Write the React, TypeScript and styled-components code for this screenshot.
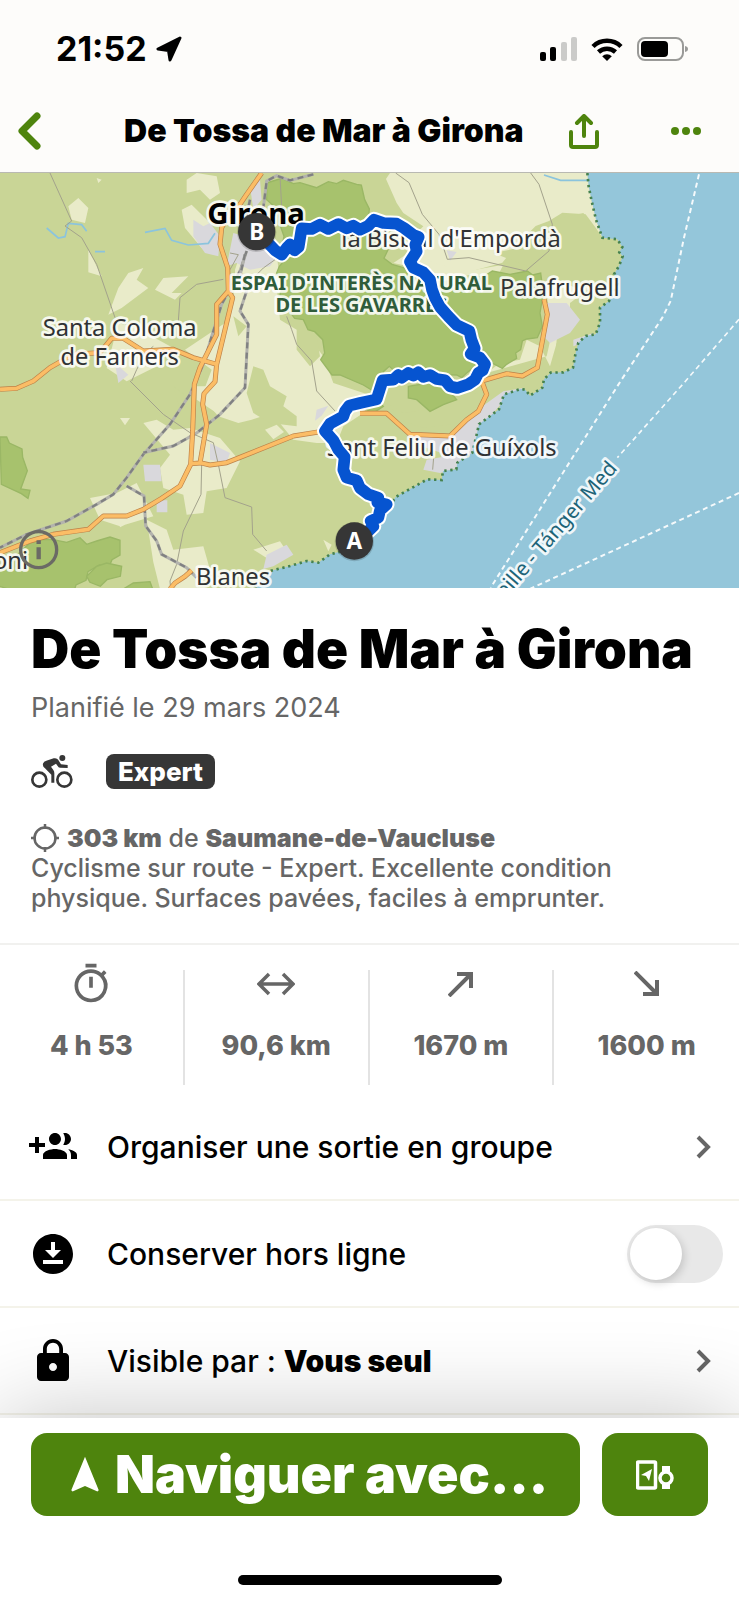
import React from "react";
import styled, { createGlobalStyle, css } from "styled-components";
import { MdDownloadForOffline, MdLock, MdNavigation, MdOutlineTimer } from "react-icons/md";

const green = "#4e840d";
const grey = "#666666";
const ink = "#363636";

const GlobalStyle = createGlobalStyle`
  *, *::before, *::after { box-sizing: border-box; }
  body {
    margin: 0;
    background: #ffffff;
    color: #000000;
    font-family: Inter, "Liberation Sans", sans-serif;
  }
  h1, h2, p, ul { margin: 0; padding: 0; }
  svg { display: block; flex: none; }
`;

const Screen = styled.div`
  display: flex;
  flex-direction: column;
  min-height: 100vh;
`;

const TopBar = styled.header`
  background: #fdfcfa;
`;

const StatusBar = styled.div`
  display: flex;
  align-items: center;
  justify-content: space-between;
  height: 98px;
  padding: 0 50px 0 56px;
`;

const Clock = styled.div`
  display: flex;
  align-items: center;
  gap: 9px;
  font-size: 34px;
  font-weight: 700;
  line-height: 40px;
`;

const StatusIcons = styled.div`
  display: flex;
  align-items: center;
  gap: 14px;
`;

const NavBar = styled.div`
  display: grid;
  grid-template-columns: 124px 1fr auto;
  align-items: center;
  height: 74px;
  padding: 0 38px 8px 0;
`;

const IconButton = styled.button`
  display: flex;
  padding: 0;
  border: 0;
  background: none;
  color: ${green};
  cursor: pointer;
`;

const BackButton = styled(IconButton)`
  padding-left: 17px;
`;

const NavTitle = styled.h2`
  font-size: 32px;
  font-weight: 900;
  line-height: 40px;
  white-space: nowrap;
`;

const NavActions = styled.div`
  display: flex;
  align-items: center;
  gap: 72px;
`;

const MapSvg = styled.svg`
  width: 100%;
  height: auto;
  border-top: 1px solid #b9b9b2;
  font-family: "Noto Sans", sans-serif;
`;

const Summary = styled.section`
  display: flex;
  flex-direction: column;
  padding: 29px 31px 30px;
  border-bottom: 2px solid #f1f1ef;
  color: ${grey};
`;

const TourTitle = styled.h1`
  color: #000000;
  font-size: 53px;
  font-weight: 900;
  line-height: 64px;
  white-space: nowrap;
`;

const Planned = styled.p`
  margin-top: 11px;
  font-size: 27px;
  font-weight: 400;
  line-height: 32px;
`;

const SportRow = styled.div`
  display: flex;
  align-items: center;
  gap: 33px;
  margin-top: 30px;
  color: ${ink};
`;

const Badge = styled.span`
  padding: 0 12px;
  border-radius: 8px;
  background: ${ink};
  color: #ffffff;
  font-size: 26px;
  font-weight: 800;
  line-height: 35px;
`;

const Description = styled.p`
  margin-top: 34px;
  font-size: 25px;
  font-weight: 500;
  line-height: 30px;

  strong { font-weight: 900; }
`;

const Origin = styled.span`
  display: flex;
  align-items: center;
  gap: 8px;
`;

const Stats = styled.ul`
  display: grid;
  grid-template-columns: repeat(4, 1fr);
  padding: 25px 0 9px;
  list-style: none;
`;

const Stat = styled.li`
  display: flex;
  flex-direction: column;
  align-items: center;
  height: 115px;
  border-right: 2px solid #e3e3e3;
  color: ${grey};
  font-size: 27px;
  font-weight: 800;
  line-height: 32px;

  &:last-child { border-right: 0; }
`;

const StatIcon = styled.span`
  display: flex;
  align-items: center;
  height: 44px;
  margin: -8px 0 24px;
`;

const Actions = styled.section`
  padding-bottom: 3px;
`;

const rowStyle = css`
  display: flex;
  align-items: center;
  width: 100%;
  height: 107px;
  padding: 0 27px 0 29px;
  border: 0;
  border-bottom: 2px solid #f4f3ea;
  background: none;
  color: #000000;
  font: 500 30px/36px Inter, "Liberation Sans", sans-serif;
  text-align: left;
  cursor: pointer;

  strong { font-weight: 900; }
`;

const ActionRow = styled.button`${rowStyle}`;

const ToggleRow = styled.label`
  ${rowStyle}
  padding-right: 16px;
`;

const RowText = styled.span`
  flex: 1;
  padding-left: 30px;
`;

const Switch = styled.input`
  appearance: none;
  display: flex;
  align-items: center;
  width: 96px;
  height: 58px;
  margin: 0;
  padding: 3px;
  border-radius: 29px;
  background: #e8e8e8;
  cursor: pointer;

  &::before {
    content: "";
    width: 52px;
    height: 52px;
    border-radius: 50%;
    background: #ffffff;
    box-shadow: 2px 3px 8px rgba(0, 0, 0, 0.16);
  }
  &:checked { background: ${green}; }
  &:checked::before { margin-left: auto; }
`;

const Footer = styled.footer`
  position: sticky;
  bottom: 0;
  margin-top: auto;
  padding: 15px 31px;
  background: #ffffff;
  box-shadow: 0 0 96px rgba(0, 0, 0, 0.24);
`;

const FooterButtons = styled.div`
  display: flex;
  gap: 22px;
`;

const PrimaryButton = styled.button`
  display: flex;
  align-items: center;
  justify-content: center;
  gap: 8px;
  height: 83px;
  padding: 0;
  border: 0;
  border-radius: 16px;
  background: ${green};
  color: #ffffff;
  font: 900 52px/64px Inter, "Liberation Sans", sans-serif;
  cursor: pointer;
`;

const NavigateButton = styled(PrimaryButton)`
  flex: 1;
`;

const DeviceButton = styled(PrimaryButton)`
  width: 106px;
`;

const HomeIndicator = styled.div`
  width: 264px;
  height: 10px;
  margin: 59px auto 0;
  border-radius: 5px;
  background: #000000;
`;

const MapPlace = styled.text<{ $size?: number; $weight?: number; $fill?: string }>`
  font-size: ${(p) => p.$size ?? 71}px;
  font-weight: ${(p) => p.$weight ?? 400};
  fill: ${(p) => p.$fill ?? "#303234"};
  stroke: rgba(255, 255, 255, 0.85);
  stroke-width: 16px;
  stroke-linejoin: round;
  paint-order: stroke;
`;

const coast =
  "1762,0 1766,40 1775,84 1788,140 1807,194 1852,199 1867,222 1858,238 1868,250 1857,279 1842,304 1852,332 1827,384 1800,404 1800,449 1787,484 1757,489 1735,509 1727,539 1719,584 1690,598 1652,599 1632,619 1627,644 1590,668 1576,650 1562,648 1512,664 1497,709 1437,754 1429,789 1417,839 1372,869 1369,889 1329,894 1325,921 1282,919 1237,944 1187,972 1165,1005 1122,1075 1063,1125 990,1144 955,1169 920,1164 870,1179 810,1194 760,1248";

const gavarres =
  "800,30 845,16 880,32 900,29 950,44 985,26 1010,32 1030,22 1070,34 1084,36 1094,80 1108,108 1104,150 1122,160 1150,196 1164,230 1152,256 1176,274 1210,284 1240,300 1290,330 1340,346 1400,344 1440,318 1477,294 1530,304 1582,294 1598,306 1622,300 1630,360 1620,420 1627,460 1612,494 1580,498 1567,504 1562,530 1547,540 1550,556 1520,574 1507,586 1480,572 1457,568 1440,590 1420,584 1400,600 1385,614 1370,606 1310,604 1240,594 1190,600 1168,580 1150,596 1142,640 1116,652 1090,636 1020,606 996,606 962,560 974,540 968,500 944,476 924,470 910,440 884,436 866,412 862,380 840,366 846,330 830,300 838,280 852,264 846,220 852,190 838,150 834,110 800,80";

const highways = [
  "785,0 740,64 720,94 685,130 665,164 660,214 683,284 685,354 650,394 650,484 600,584 583,634 578,774 572,874 540,939 485,976 430,1009 380,1029 310,1029 265,1069 160,1084 90,1104 0,1139",
  "685,354 698,374 650,574 645,626 612,662 608,694 620,754 600,870 572,872",
  "600,869 630,876 680,869 880,789 960,776",
  "1080,721 1160,721 1230,784 1350,789 1400,740 1435,715 1460,664 1445,624 1520,602 1567,609 1612,584 1642,424 1632,379",
  "0,649 50,646 100,624 150,584 220,544 300,539 335,496 370,496 430,534 520,529 580,554 650,574",
  "510,1248 525,1230 555,1210 575,1192",
];

const lanes = [
  "150,0 215,144 195,159 245,194 290,274 345,434",
  "670,319 590,334 540,374 535,444",
  "460,520 435,540 410,590 395,624",
  "825,260 790,285 745,330",
  "690,240 715,245 690,290",
  "860,430 875,470 890,514 935,564 950,654 1005,714",
  "840,10 845,100 850,150",
  "1187,0 1227,29 1267,124 1317,184 1342,259 1407,254 1577,294 1647,234 1657,154 1617,34 1592,0",
  "390,624 490,724 570,779 640,809 655,874 675,974 755,1002 758,1084 800,1134",
  "605,874 603,964 550,1074 530,1174 510,1224 512,1248",
  "1302,840 1298,890",
];

const rails = [
  "940,4 870,22 830,8 800,24 790,104",
  "740,234 720,294 665,394 640,474 610,574 570,664 510,754 430,844 380,914 340,964 290,994 200,1044 80,1084 0,1124",
  "735,244 722,300 740,354 720,414 745,454 735,644 660,724 590,780 520,819 430,839",
  "380,939 432,969 437,1059 470,1104 485,1144 560,1184 590,1214",
  "750,80 735,150",
];

const route =
  "790,195 825,232 845,245 860,225 870,214 884,232 896,222 905,166 935,168 960,155 985,168 1015,153 1040,166 1060,158 1080,170 1105,158 1122,140 1150,150 1190,152 1212,165 1240,186 1256,192 1246,215 1250,235 1230,266 1240,284 1270,298 1290,320 1296,350 1305,374 1320,402 1345,430 1370,456 1408,474 1414,500 1424,526 1412,543 1440,554 1455,574 1448,592 1435,600 1425,620 1405,634 1372,645 1350,640 1335,622 1310,618 1290,606 1270,612 1255,598 1240,608 1225,600 1205,614 1195,606 1180,620 1148,622 1130,679 1080,690 1048,698 1035,715 1030,730 990,752 975,774 1000,802 1015,830 1034,852 1030,890 1040,914 1070,922 1080,945 1105,964 1135,974 1132,988 1160,994 1140,1012 1135,1034 1112,1044 1120,1060 1100,1079";

function RouteMap() {
  return (
    <MapSvg viewBox="0 0 2217 1245" role="img" aria-label="Carte du parcours" fill="none">
      <rect width="2217" height="1248" fill="#c9d596" />
      <g fill="#e9ebc9">
        <path d="M1170 0H1762l13 84 32 110-20-30-30-40-70-5-40 25-40 15-60 60-40 50-110 30-120 0-60-70-40-50-20-40 30-20-70-40z" />
        <path d="M560 20l30-20 60 10 10 50-30 20-30-30-40 10zM545 110l30-15 50 50 20 60-40 20-50-60zM700 200l70 0 60 40 10 90 20 70 40 60 70 90 30 80 120 40-30 50-60 40-20 50-60 0-70-10-65-80-60 20-40 10-60-20-50-60 30-80-80-60 120-80 30-100 0-60 20-60z" />
        <path d="M235 75l30 30-10 45-40-10-10-40zM290 15l15 5-10 10zM265 230l30 60 10 20-40-12zM385 300l45-15-20 35 35 25-80 60-40 20 30-80zM490 315l75-5-50 50 30 0-20 20-60-30zM355 450l55 15 110 60-60 60-80 40-60-40z" />
        <path d="M430 750l40-10 50 30 50-5 90 30 60 70-40 80-60 10-10 65-50 5-10-60-60-20-10-60 30-40zM360 735l30 0-15 22zM590 640l120 0 60 60-70 30-50-10-60-40zM795 770l35-15 22 22-32 22zM270 975l80-15 60-30 30 60 20 40-100 30-60-20zM350 1028l70 5-60 30zM440 1040l60 30 20 60 90-10 20 70-40 58-110 0-20-80zM760 1130l80-25 20 30-60 20zM970 1100l25 15-10 20z" />
        <path d="M1460 600l40-30 60-10 20-60 40 20 30 60 20-70 40-30 0-90 80-60-60-50-60 10-30 80 20 90-20 90zM1180 270l60-40 60 40 100 25 110-20-20 40-80-10-80 20-80-40z" />
      </g>
      <g fill="#c9d596">
        <path d="M1080 0l70 0 40 90 20 30 60 40-40 40-70 20-50-60zM1480 240l100-20 80-80 90-20 55 70 50 5 14 30-12 60-60 50-70 10-130-60z" />
        <path d="M830 340l60 90 60 60 10 60-30 30-40-50 0-60-50-30zM760 580l30 10 20 50 50 30-10 30 40 30 0 30-80-10-50-30-20-60zM700 430l40 30-25 30zM520 640l40 30-20 40zM1670 500l20-60 25 40 10 70-30 40-30-20z" />
        <path d="M1160 690l50 30 70-10 80-40 70-10 20 30-60 60-120 15-60-20z" />
      </g>
      <polygon points={gavarres} fill="#a7c26d" stroke="#9ab765" strokeWidth="4" />
      <g fill="#a7c26d" stroke="#9ab765" strokeWidth="4">
        <path d="M1225 640l60-10 60 20 25 30-40 15-40 20-40-35-25-5zM1080 700l50-20 20 20-30 20z" />
        <path d="M0 792l20 0 8 18 38 18 2 25 14 40-20 55 28 4-6 24-20-14-60-28zM100 1100l60 0 40 8 40-14 20 20 30-10 40-12 30 10 0 44-24 14-8 20-30-4-34 20-6 26-30 14-4 12-200 0-60-20z" />
        <path d="M270 1228l-10-18 30-30 30-10 45 10-4 30-40 10-20 20zM370 1248l30-18 50-4 8 22z" />
      </g>
      <g fill="#d9d8dc">
        <path d="M580 140l30 20 20-10 30 40-5 60-40-10-35-50zM700 180l100 30 40 30-30 40-60 10-40-20-30 10zM750 40l30-20 5 60-25 30zM1640 390l60 0 40 50-30 40-60 30-20-20zM1720 500l60-20-10 20-50 20zM1230 790l120 5 90-90 70-50 60-10-10 20-50 20-60 70-20 70-60 60-50 15 5-60-60-20zM1280 860l60-10-20 50-50-10zM430 875l50 0 5 50-50 0zM470 982l32 0 0 36-32 0zM630 810l60 30-10 30-50-10zM800 1145l60-30 20 30-60 35-30 8zM950 710l35-12-20 30-20 15zM345 570l40 35-30 25zM1340 232l30 5-20 26z" />
      </g>
      <path d="M140 165l35 30 20-4 10-40 40 4 15 20M435 178l60-12 20 36 50 14 60-5 20-30M285 236h30M1632 6l50 16h80" stroke="#8bc4dd" strokeWidth="5" />

      <polygon points={`${coast} 2217,1248 2217,0`} fill="#94c6da" />
      <polyline points={coast} stroke="#46824f" strokeWidth="8" strokeDasharray="7 11" />

      {lanes.map((points) => (
        <polyline key={points} points={points} stroke="#a3a28c" strokeWidth="3" />
      ))}
      {rails.map((points) => (
        <g key={points}>
          <polyline points={points} stroke="#b3b3ad" strokeWidth="9" />
          <polyline points={points} stroke="#808182" strokeWidth="7" strokeDasharray="18 13" />
        </g>
      ))}
      {highways.map((points) => (
        <polyline key={points} points={points} stroke="#bd8148" strokeWidth="15" strokeLinejoin="round" />
      ))}
      {highways.map((points) => (
        <polyline key={points} points={points} stroke="#fbbd66" strokeWidth="11" strokeLinejoin="round" />
      ))}

      <g stroke="#ffffff" strokeWidth="6" strokeDasharray="15 11" opacity="0.9">
        <polyline points="2097,4 2052,194 2012,384 1987,434 1862,624 1472,1244" />
        <polyline points="2217,439 2057,624 1852,854" strokeWidth="5" />
        <polyline points="2217,960 1587,1249" />
      </g>

      <MapPlace x="622" y="152" $size={88} $weight={700} $fill="#000000">Girona</MapPlace>
      <MapPlace x="1024" y="221">la Bisbal d'Empordà</MapPlace>
      <MapPlace x="1500" y="370">Palafrugell</MapPlace>
      <MapPlace x="359" y="488" textAnchor="middle">Santa Coloma</MapPlace>
      <MapPlace x="359" y="577" textAnchor="middle">de Farners</MapPlace>
      <MapPlace x="980" y="850">Sant Feliu de Guíxols</MapPlace>
      <MapPlace x="588" y="1235">Blanes</MapPlace>
      <MapPlace x="84" y="1188" textAnchor="end">oni</MapPlace>
      <MapPlace x="1084" y="351" textAnchor="middle" $size={60} $weight={700} $fill="#2f5c3a">
        ESPAI D'INTERÈS NATURAL
      </MapPlace>
      <MapPlace x="1084" y="417" textAnchor="middle" $size={60} $weight={700} $fill="#2f5c3a">
        DE LES GAVARRES
      </MapPlace>
      <MapPlace transform="translate(1854 888) rotate(-49)" textAnchor="end" $size={62} $fill="#1d6478">
        eille - Tánger Med
      </MapPlace>

      <polyline points={route} stroke="#ffffff" strokeWidth="47" strokeLinejoin="round" strokeLinecap="round" />
      <polyline points={route} stroke="#0654d0" strokeWidth="35" strokeLinejoin="round" strokeLinecap="round" />

      <g fontSize="68" fontWeight="700" textAnchor="middle">
        <circle cx="770" cy="178" r="59" fill="#000000" opacity="0.15" />
        <circle cx="770" cy="176" r="56" fill={ink} />
        <text x="770" y="200" fill="#ffffff">B</text>
        <circle cx="1063" cy="1106" r="59" fill="#000000" opacity="0.15" />
        <circle cx="1063" cy="1104" r="56" fill={ink} />
        <text x="1063" y="1128" fill="#ffffff">A</text>
      </g>
      <g stroke="#6b6a65" strokeWidth="10">
        <circle cx="116" cy="1130" r="54" />
        <path d="M116 1123v36M116 1102v11" strokeWidth="13" />
      </g>
    </MapSvg>
  );
}

const BackIcon = () => (
  <svg width="25" height="40" viewBox="0 0 25 40" fill="none" stroke="currentColor" strokeWidth="7" strokeLinecap="round" strokeLinejoin="round">
    <path d="M20 5L5 20l15 15" />
  </svg>
);

const ShareIcon = () => (
  <svg width="30" height="35" viewBox="0 0 30 35" fill="none" stroke="currentColor" strokeWidth="4" strokeLinecap="round" strokeLinejoin="round">
    <path d="M2 18v13q0 2 2 2h22q2 0 2-2V18" />
    <path d="M15 22V3M8 9l7-7 7 7" />
  </svg>
);

const MoreIcon = () => (
  <svg width="30" height="8" viewBox="0 0 30 8" fill="currentColor">
    <circle cx="4" cy="4" r="4" />
    <circle cx="15" cy="4" r="4" />
    <circle cx="26" cy="4" r="4" />
  </svg>
);

const LocationIcon = () => (
  <svg width="26" height="26" viewBox="0 0 26 26" stroke="#000000" strokeWidth="3" strokeLinejoin="round">
    <path d="M24 2L2 13l10.500 1.500L14 24z" />
  </svg>
);

const SignalIcon = () => (
  <svg width="37" height="24" viewBox="0 0 37 24">
    <rect x="0" y="15" width="6" height="9" rx="2" />
    <rect x="10" y="10" width="6" height="14" rx="2" />
    <g fill="#cbcbc9">
      <rect x="21" y="5" width="6" height="19" rx="2" />
      <rect x="31" y="0" width="6" height="24" rx="2" />
    </g>
  </svg>
);

const WifiIcon = () => (
  <svg width="32" height="24" viewBox="0 0 32 24" fill="none" stroke="#000000" strokeWidth="4.500">
    <path d="M2 9.500a20 20 0 0 1 28 0" />
    <path d="M7.500 15a12.500 12.500 0 0 1 17 0" />
    <path d="M16 24l-4.800-4.800a7 7 0 0 1 9.600 0z" fill="#000000" stroke="none" />
  </svg>
);

const BatteryIcon = () => (
  <svg width="52" height="24" viewBox="0 0 52 24">
    <rect x="1" y="1" width="45" height="22" rx="7" fill="none" stroke="#9a9a98" strokeWidth="2" />
    <rect x="4" y="4" width="27" height="16" rx="4" />
    <path d="M48 9c4 .5 4 5.500 0 6z" fill="#9a9a98" />
  </svg>
);

const RoadBikeIcon = () => (
  <svg width="42" height="35" viewBox="35 42 126 105" fill="currentColor">
    <g fill="none" stroke="currentColor" strokeWidth="8">
      <circle cx="60" cy="119" r="21" />
      <circle cx="135" cy="119" r="21" />
    </g>
    <circle cx="129" cy="54" r="9" />
    <path d="M71 71q2-7 10-9l22-7q10-2 14 5l8 13 20 2v9l-23-1q-5 0-7-5l-5-7-15 9 7 10q3 4 3 10v28H96v-24l-19-19q-8-6-6-14z" />
  </svg>
);

const CrosshairIcon = () => (
  <svg width="28" height="28" viewBox="0 0 28 28" fill="none" stroke="currentColor" strokeWidth="2.500">
    <circle cx="14" cy="14" r="10.500" />
    <path d="M14 0v5M14 23v5M0 14h5M23 14h5" />
  </svg>
);

const DistanceIcon = () => (
  <svg width="38" height="24" viewBox="0 0 38 24" fill="none" stroke="currentColor" strokeWidth="3.500">
    <path d="M3 12h32M12 2L2 12l10 10M26 2l10 10-10 10" />
  </svg>
);

const SlopeIcon = ({ down = false }: { down?: boolean }) => (
  <svg width="26" height="26" viewBox="0 0 26 26" fill="none" stroke="currentColor" strokeWidth="4">
    {down ? <path d="M1 1l22 22M23 9v14H9" /> : <path d="M1 25L23 3M9 3h14v14" />}
  </svg>
);

const GroupAddIcon = () => (
  <svg width="48" height="48" viewBox="0 0 24 24" fill="currentColor">
    <path d="M8 10H5V7H3v3H0v2h3v3h2v-3h3v-2zm10 1c1.660 0 2.990-1.340 2.990-3S19.660 5 18 5c-.32 0-.63.05-.91.14.57.81.9 1.790.9 2.860s-.34 2.040-.9 2.860c.28.09.59.14.91.14zm-5 0c1.660 0 2.990-1.340 2.990-3S14.660 5 13 5c-1.660 0-3 1.340-3 3s1.340 3 3 3zm6.620 2.160c.83.73 1.380 1.660 1.380 2.840v2h3v-2c0-1.540-2.370-2.490-4.380-2.840zM13 13c-2 0-6 1-6 3v2h12v-2c0-2-4-3-6-3z" />
  </svg>
);

const ChevronIcon = () => (
  <svg width="16" height="24" viewBox="0 0 16 24" fill="none" stroke={grey} strokeWidth="4">
    <path d="M2 2l10 10L2 22" />
  </svg>
);

const DevicesIcon = () => (
  <svg width="38" height="30" viewBox="0 0 38 30" fill="none" stroke="currentColor" strokeWidth="3.500">
    <rect x="1.500" y="2" width="18" height="26" rx="1" />
    <path d="M16 9l-3 12-3-5-5-1z" fill="currentColor" stroke="none" />
    <circle cx="30" cy="18" r="6" />
    <path d="M26 12V6h8v6zM26 24v5h8v-5z" fill="currentColor" stroke="none" />
  </svg>
);

const stats = [
  { value: "4 h 53", icon: <MdOutlineTimer size={44} /> },
  { value: "90,6 km", icon: <DistanceIcon /> },
  { value: "1670 m", icon: <SlopeIcon /> },
  { value: "1600 m", icon: <SlopeIcon down /> },
];

export default function App() {
  return (
    <Screen>
      <GlobalStyle />
      <TopBar>
        <StatusBar>
          <Clock>
            21:52 <LocationIcon />
          </Clock>
          <StatusIcons>
            <SignalIcon />
            <WifiIcon />
            <BatteryIcon />
          </StatusIcons>
        </StatusBar>
        <NavBar>
          <BackButton aria-label="Retour">
            <BackIcon />
          </BackButton>
          <NavTitle>De Tossa de Mar à Girona</NavTitle>
          <NavActions>
            <IconButton aria-label="Partager">
              <ShareIcon />
            </IconButton>
            <IconButton aria-label="Plus d'options">
              <MoreIcon />
            </IconButton>
          </NavActions>
        </NavBar>
      </TopBar>

      <RouteMap />

      <Summary>
        <TourTitle>De Tossa de Mar à Girona</TourTitle>
        <Planned>Planifié le 29 mars 2024</Planned>
        <SportRow>
          <RoadBikeIcon />
          <Badge>Expert</Badge>
        </SportRow>
        <Description>
          <Origin>
            <CrosshairIcon />
            <span>
              <strong>303 km</strong> de <strong>Saumane-de-Vaucluse</strong>
            </span>
          </Origin>
          Cyclisme sur route - Expert. Excellente condition physique. Surfaces pavées, faciles à emprunter.
        </Description>
      </Summary>

      <Stats>
        {stats.map((stat) => (
          <Stat key={stat.value}>
            <StatIcon>{stat.icon}</StatIcon>
            {stat.value}
          </Stat>
        ))}
      </Stats>

      <Actions>
        <ActionRow>
          <GroupAddIcon />
          <RowText>Organiser une sortie en groupe</RowText>
          <ChevronIcon />
        </ActionRow>
        <ToggleRow>
          <MdDownloadForOffline size={48} />
          <RowText>Conserver hors ligne</RowText>
          <Switch type="checkbox" role="switch" />
        </ToggleRow>
        <ActionRow>
          <MdLock size={48} />
          <RowText>
            Visible par : <strong>Vous seul</strong>
          </RowText>
          <ChevronIcon />
        </ActionRow>
      </Actions>

      <Footer>
        <FooterButtons>
          <NavigateButton>
            <MdNavigation size={44} />
            Naviguer avec…
          </NavigateButton>
          <DeviceButton aria-label="Envoyer vers un appareil">
            <DevicesIcon />
          </DeviceButton>
        </FooterButtons>
        <HomeIndicator />
      </Footer>
    </Screen>
  );
}
